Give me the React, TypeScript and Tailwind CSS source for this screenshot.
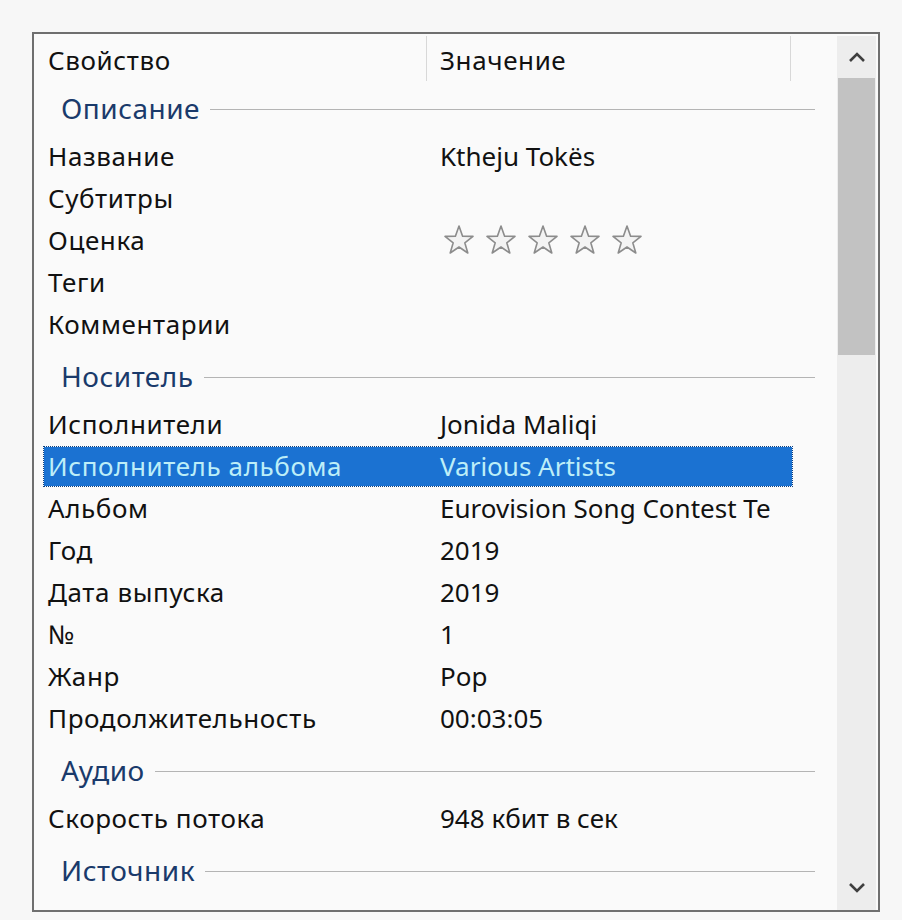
import React from "react";

type Row = { k: string; v?: string; stars?: boolean; sel?: boolean };
type Group = { title: string; rows: Row[] };

const groups: Group[] = [
  {
    title: "Описание",
    rows: [
      { k: "Название", v: "Ktheju Tokës" },
      { k: "Субтитры" },
      { k: "Оценка", stars: true },
      { k: "Теги" },
      { k: "Комментарии" },
    ],
  },
  {
    title: "Носитель",
    rows: [
      { k: "Исполнители", v: "Jonida Maliqi" },
      { k: "Исполнитель альбома", v: "Various Artists", sel: true },
      { k: "Альбом", v: "Eurovision Song Contest Te" },
      { k: "Год", v: "2019" },
      { k: "Дата выпуска", v: "2019" },
      { k: "№", v: "1" },
      { k: "Жанр", v: "Pop" },
      { k: "Продолжительность", v: "00:03:05" },
    ],
  },
  {
    title: "Аудио",
    rows: [{ k: "Скорость потока", v: "948 кбит в сек" }],
  },
  {
    title: "Источник",
    rows: [],
  },
];

function Star() {
  return (
    <svg width="32" height="32" viewBox="0 0 32 32">
      <polygon
        points="16,2 19.6,12.2 30,12.4 21.8,18.8 24.8,29 16,23 7.2,29 10.2,18.8 2,12.4 12.4,12.2"
        fill="#f3f3f3"
        stroke="#8c8c8c"
        strokeWidth="1.6"
        strokeLinejoin="round"
      />
    </svg>
  );
}

function Chevron({ up }: { up?: boolean }) {
  return (
    <svg width="20" height="14" viewBox="0 0 20 14">
      <polyline
        points={up ? "3,11 10,4 17,11" : "3,3 10,10 17,3"}
        fill="none"
        stroke="#3f3f3f"
        strokeWidth="2.6"
      />
    </svg>
  );
}

export default function App() {
  return (
    <div
      className="w-[902px] h-[920px] bg-[#f7f7f7] pt-[32px] pl-[32px] overflow-hidden"
      style={{ fontFamily: '"Noto Sans", "Open Sans", sans-serif' }}
    >
      <div className="w-[848px] h-[880px] border-2 border-[#6f6f6f] bg-[#fafafa] flex overflow-hidden">
        <div className="flex-1 flex flex-col overflow-hidden">
          {/* Header */}
          <div className="h-[49px] shrink-0 flex text-[26px] text-[#111] leading-none">
            <div className="w-[393px] pl-[14px] pt-[11px] border-r border-[#d8d8d8] my-[2px] tracking-[0.6px]">
              Свойство
            </div>
            <div className="w-[364px] pl-[13px] pt-[11px] border-r border-[#d8d8d8] my-[2px] tracking-[0.6px]">
              Значение
            </div>
          </div>
          {groups.map((g, gi) => (
            <div key={g.title} className="shrink-0">
              <div
                className={
                  "h-[52px] flex items-center pl-[27px] pr-[22px] " +
                  (gi === 0 ? "" : "mt-[6px]")
                }
              >
                <span className="text-[28px] tracking-[0.5px] text-[#1a3a6b] leading-none pb-[3px]">
                  {g.title}
                </span>
                <div className="flex-1 h-px bg-[#b4b4b4] ml-[10px]" />
              </div>
              {g.rows.map((r) => (
                <div key={r.k} className="h-[42px] flex items-center pl-[10px]">
                  <div
                    className={
                      "w-[748px] h-[39px] flex items-center text-[26px] leading-none " +
                      (r.sel
                        ? "bg-[#1b72d2] text-[#bdeef8] outline outline-1 outline-dotted outline-[#0b3f80]"
                        : "text-[#111]")
                    }
                  >
                    <div className="w-[383px] pl-[4px] whitespace-nowrap tracking-[0.6px]">{r.k}</div>
                    <div className="pl-[13px] whitespace-nowrap flex items-center">
                      {r.stars ? (
                        <div className="flex gap-[10px] ml-[3px]">
                          <Star />
                          <Star />
                          <Star />
                          <Star />
                          <Star />
                        </div>
                      ) : (
                        r.v
                      )}
                    </div>
                  </div>
                </div>
              ))}
            </div>
          ))}
        </div>
        {/* Scrollbar */}
        <div className="w-[39px] shrink-0 bg-[#ededed] flex flex-col mr-[2px] mt-[2px]">
          <div className="h-[42px] flex items-center justify-center">
            <Chevron up />
          </div>
          <div className="h-[277px] mx-[1px] bg-[#c2c2c2]" />
          <div className="flex-1" />
          <div className="h-[44px] flex items-center justify-center">
            <Chevron />
          </div>
        </div>
      </div>
    </div>
  );
}
